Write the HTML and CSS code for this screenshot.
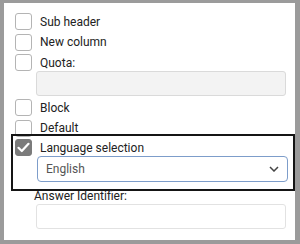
FILE: index.html
```html
<!DOCTYPE html>
<html lang="en">
<head>
    <meta charset="UTF-8">
    <title>Question options</title>
    <link rel="stylesheet" href="styles.css">
</head>
<body>
    <div class="panel">
        <label class="check-row"><span class="box"></span>Sub header</label>
        <label class="check-row"><span class="box"></span>New column</label>
        <label class="check-row"><span class="box"></span>Quota:</label>
        <input class="text-field quota" type="text">
        <label class="check-row"><span class="box"></span>Block</label>
        <label class="check-row"><span class="box"></span>Default</label>

        <!-- highlighted option -->
        <div class="highlight">
            <label class="check-row"><span class="box checked">
                <svg width="13" height="11" viewBox="0 0 13 11"><path d="M1.5 5.8 L4.8 9 L11.5 1.8" fill="none" stroke="#fff" stroke-width="2.2" stroke-linecap="round" stroke-linejoin="round"/></svg>
            </span>Language selection</label>
            <div class="select">
                <span>English</span>
                <svg width="10" height="6" viewBox="0 0 10 6"><path d="M1 1 L5 5 L9 1" fill="none" stroke="#444" stroke-width="1.5"/></svg>
            </div>
        </div>

        <div class="field-label">Answer Identifier:</div>
        <input class="text-field answer" type="text">
    </div>
</body>
</html>
```

FILE: styles.css
```css
/* BASE */
* { margin: 0; padding: 0; box-sizing: border-box; }
body { width: 300px; height: 244px; background: #9b9b9b; font-family: Roboto, 'Liberation Sans', sans-serif; font-size: 12px; color: #222; overflow: hidden; }

/* PANEL */
.panel {
    margin: 3px 5px 0 4px;
    height: 237px;
    background: #fff;
    padding: 10px 0 0 7px;
    display: flex;
    flex-direction: column;
}

/* CHECKBOX ROWS */
.check-row { display: flex; align-items: center; gap: 8px; height: 17px; margin: 0 0 3.5px 4px; }
.box {
    width: 17px;
    height: 17px;
    border: 1px solid #b4b4b4;
    border-radius: 3px;
    background: #fff;
    display: flex;
    align-items: center;
    justify-content: center;
    flex-shrink: 0;
}
.box.checked { background: #7b7b7b; border-color: #7b7b7b; }

/* FIELDS */
.text-field {
    display: block;
    width: 250px;
    height: 25px;
    margin-left: 25px;
    border: 1px solid #dadada;
    border-radius: 3px;
    font-family: inherit;
}
.quota { background: #f3f3f3; margin-top: -3.5px; margin-bottom: 3px; }
.answer { background: #fff; border-color: #e2e2e2; }

/* HIGHLIGHT */
.highlight {
    border: 2px solid #151515;
    padding: 3px 0 7px 2px;
    margin-top: -6px;
}
.highlight .check-row { margin: 0; }

.select {
    margin-left: 22px;
    width: 251px;
    height: 26px;
    border: 1px solid #7d9dca;
    border-radius: 4px;
    display: flex;
    align-items: center;
    justify-content: space-between;
    padding: 0 8px 0 8px;
    color: #555;
}

.field-label { margin: -1px 0 0 23px; height: 14px; line-height: 13px; }
```
